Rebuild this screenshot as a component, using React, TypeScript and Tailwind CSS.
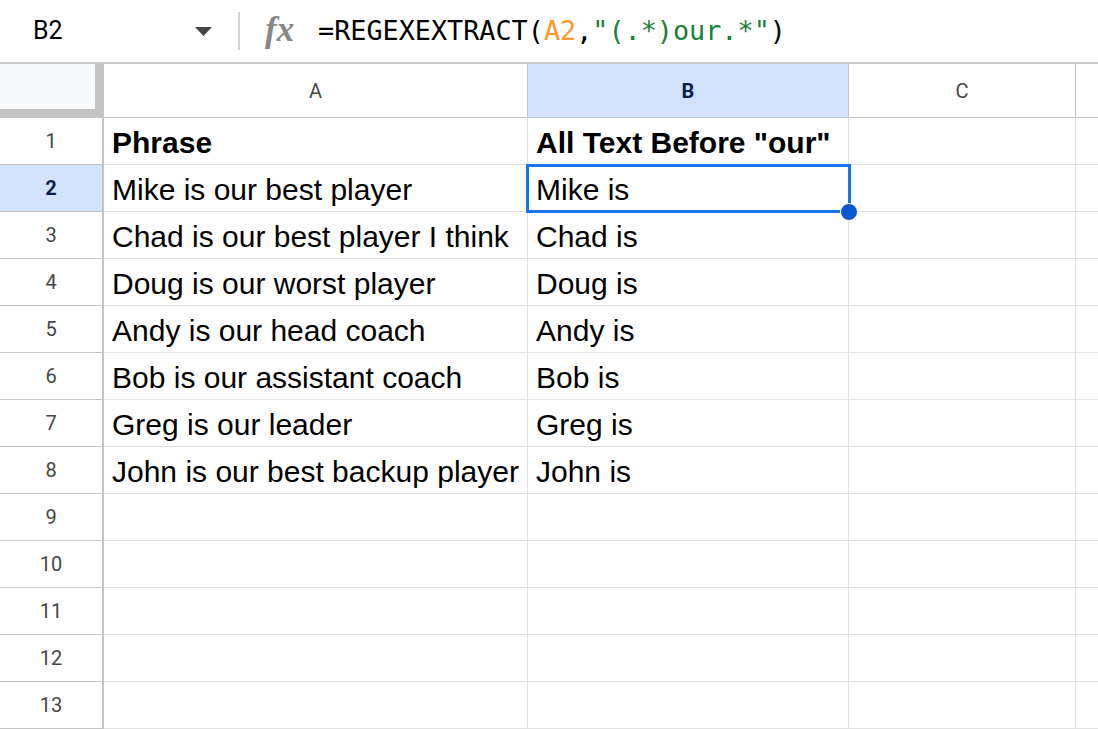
import React from 'react'

const rows = [
  { a: 'Phrase', b: 'All Text Before "our"', bold: true },
  { a: 'Mike is our best player', b: 'Mike is' },
  { a: 'Chad is our best player I think', b: 'Chad is' },
  { a: 'Doug is our worst player', b: 'Doug is' },
  { a: 'Andy is our head coach', b: 'Andy is' },
  { a: 'Bob is our assistant coach', b: 'Bob is' },
  { a: 'Greg is our leader', b: 'Greg is' },
  { a: 'John is our best backup player', b: 'John is' },
  { a: '', b: '' },
  { a: '', b: '' },
  { a: '', b: '' },
  { a: '', b: '' },
  { a: '', b: '' },
]

const FormulaBar = () => (
  <div className="h-[64px] border-b-2 border-[#c7c7c7] flex items-center bg-white">
    <div className="w-[222px] flex items-center justify-between pl-[33px] pr-[10px]">
      <span className="text-[25px] text-black font-['Roboto',sans-serif]">B2</span>
      <svg width="17" height="9" viewBox="0 0 17 9">
        <polygon points="0,0 17,0 8.5,9" fill="#444746" />
      </svg>
    </div>
    <div className="ml-[16px] w-[2px] h-[38px] bg-[#d0d0d0]" />
    <div className="ml-[25px] w-[53px] text-[35px] leading-none italic font-bold text-[#878787] font-['Liberation_Serif',serif] -mt-[3px]">
      fx
    </div>
    <div className="text-[26.8px] whitespace-pre text-black font-['DejaVu_Sans_Mono',monospace]">
      =REGEXEXTRACT(<span className="text-[#f59a2c]">A2</span>,<span className="text-[#188038]">"(.*)our.*"</span>)
    </div>
  </div>
)

const HeaderRow = () => (
  <div className="flex h-[54px] font-['Roboto',sans-serif] text-[20px] text-[#444746]">
    <div className="w-[104px] shrink-0 h-full border-r-[9px] border-b-[9px] border-[#c4c4c4] bg-[#f8f9fa]" />
    <div className="w-[424px] shrink-0 h-full border-r border-b border-[#c4c4c4] flex items-center justify-center">A</div>
    <div className="w-[321px] shrink-0 h-full border-r border-b border-[#c4c4c4] bg-[#d3e3fd] flex items-center justify-center font-bold text-[#0b1f4b]">
      B
    </div>
    <div className="w-[227px] shrink-0 h-full border-r border-b border-[#c4c4c4] flex items-center justify-center">C</div>
    <div className="flex-1 h-full border-b border-[#c4c4c4]" />
  </div>
)

export default function App() {
  return (
    <div className="w-[1098px] h-[729px] overflow-hidden bg-white">
      <FormulaBar />
      <HeaderRow />
      {rows.map((r, i) => {
        const selected = i === 1
        return (
          <div key={i} className="flex h-[47px]">
            <div
              className={
                selected
                  ? "w-[104px] shrink-0 h-full border-r-2 border-b border-[#c4c4c4] bg-[#d3e3fd] flex items-center justify-center text-[20px] font-bold text-[#0b1f4b] font-['Roboto',sans-serif]"
                  : "w-[104px] shrink-0 h-full border-r-2 border-b border-[#c4c4c4] flex items-center justify-center text-[20px] text-[#444746] font-['Roboto',sans-serif]"
              }
            >
              {i + 1}
            </div>
            <div
              className={
                "w-[424px] shrink-0 h-full border-r border-b border-[#e1e1e1] flex items-end px-[8px] pb-[4px] text-[30px] leading-[34px] text-black whitespace-nowrap font-['Liberation_Sans',Arial,sans-serif] " +
                (r.bold ? 'font-bold' : '')
              }
            >
              {r.a}
            </div>
            <div
              className={
                "relative w-[321px] shrink-0 h-full border-r border-b border-[#e1e1e1] flex items-end px-[8px] pb-[4px] text-[30px] leading-[34px] text-black whitespace-nowrap font-['Liberation_Sans',Arial,sans-serif] " +
                (r.bold ? 'font-bold' : '')
              }
            >
              {r.b}
              {selected && (
                <div className="absolute -left-[2px] -top-[1px] w-[325px] h-[49px] border-[3px] border-[#1a73e8] z-10">
                  <div className="absolute left-[311px] top-[36px] w-[18px] h-[18px] rounded-full bg-[#0b57d0] border border-white" />
                </div>
              )}
            </div>
            <div className="w-[227px] shrink-0 h-full border-r border-b border-[#e1e1e1]" />
            <div className="flex-1 h-full border-b border-[#e1e1e1]" />
          </div>
        )
      })}
    </div>
  )
}
